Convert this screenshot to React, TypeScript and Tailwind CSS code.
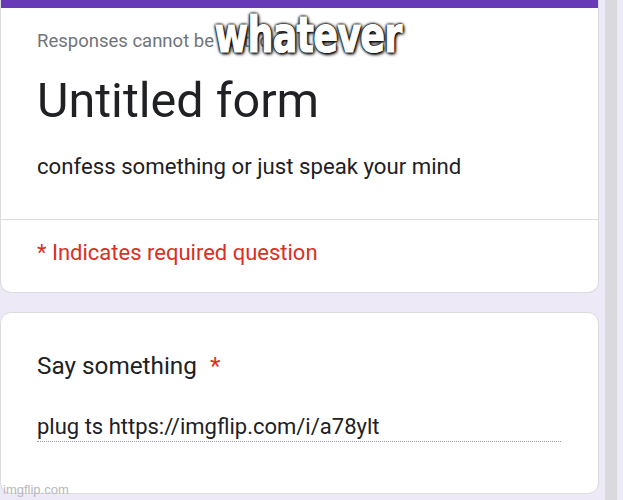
export default function App() {
  const roboto = { fontFamily: "Roboto, 'Noto Sans', Arial, sans-serif" };

  return (
    <div className="relative h-[500px] w-[623px] overflow-hidden bg-[#ede9f6]" style={roboto}>
      <div className="flex h-full">
        {/* form column */}
        <div className="flex w-[599px] flex-col">
          {/* header card */}
          <div className="overflow-hidden rounded-b-[11px] border border-t-0 border-[#dadce0] bg-white">
            <div className="h-[8px] bg-[#673ab7]" />
            <div className="px-[36px] pt-[21px] pb-[39px]">
              <p className="text-[18.5px] leading-[24px] text-[#70757a]">Responses cannot be edited</p>
              <h1 className="mt-[20px] text-[48.5px] leading-[56px] text-[#202124]">Untitled form</h1>
              <p className="mt-[23px] text-[22.2px] leading-[28px] text-[#202124]">
                confess something or just speak your mind
              </p>
            </div>
            <div className="border-t border-[#dadce0] px-[36px] pt-[19px] pb-[25px]">
              <p className="text-[22px] leading-[28px] text-[#d93025]">* Indicates required question</p>
            </div>
          </div>

          {/* question card */}
          <div className="mt-[19px] h-[182px] rounded-[11px] border border-[#dadce0] bg-white px-[36px] pt-[37px]">
            <div className="flex text-[24.3px] leading-[32px] text-[#202124]">
              <span>Say something</span>
              <span className="ml-[13px] text-[#d93025]">*</span>
            </div>
            <div className="mt-[31px] w-[524px] border-b border-dotted border-[#9aa0a6] text-[22px] leading-[28px] text-[#202124]">
              plug ts https://imgflip.com/i/a78ylt
            </div>
          </div>
        </div>

        {/* scrollbar track */}
        <div className="ml-[6px] w-[12px] bg-[#d9d9de]" />
      </div>

      {/* meme caption */}
      <div className="absolute left-[208px] top-[6px] flex w-[200px] justify-center">
        <span
          className="inline-block scale-x-[0.76] scale-y-[1.04] text-[48px] font-bold leading-[56px] tracking-[-1px] text-white [-webkit-text-stroke:1.2px_#fff] [text-shadow:0_0_4px_#000,0_0_4px_#000,0_0_3px_#000,0_0_2px_#000,0_0_2px_#000,2px_2px_4px_#000]"
          style={{ fontFamily: "Impact, 'DejaVu Sans', sans-serif" }}
        >
          whatever
        </span>
      </div>

      {/* watermark */}
      <div className="absolute bottom-[3px] left-[3px] text-[13px] leading-[14px] text-[#b8b8bc]" style={{ fontFamily: "'Liberation Sans', Arial, sans-serif" }}>
        imgflip.com
      </div>
    </div>
  );
}
